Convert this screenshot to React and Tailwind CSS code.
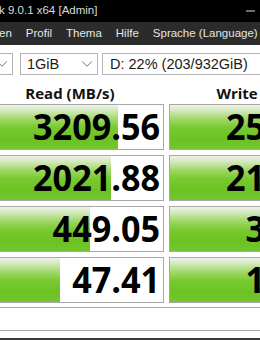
import React from "react";
import { ChevronDown } from "lucide-react";

const rows = [
  { read: "3209.56", readFill: 141, write: "2544.69", writeFill: 140 },
  { read: "2021.88", readFill: 134, write: "2135.33", writeFill: 136 },
  { read: "449.05", readFill: 113, write: "356.62", writeFill: 118 },
  { read: "47.41", readFill: 83, write: "132.75", writeFill: 104 },
];

const menu = ["en", "Profil", "Thema", "Hilfe", "Sprache (Language)"];

const ResultCell = ({ value, fill }) => (
  <div className="relative h-[46px] border border-[#a8a8a8] bg-white overflow-hidden">
    <div
      className="absolute inset-y-0 left-0 bg-[linear-gradient(180deg,#eef3ea_0%,#cfe8b8_14%,#9fd866_32%,#78c92f_52%,#6cc222_80%,#74c632_100%)]"
      style={{ width: fill }}
    />
    <div className="relative h-full flex items-center justify-end pr-[3px] origin-right scale-x-95 font-['Open_Sans',sans-serif] font-bold text-[36px] leading-none text-black">
      {value}
    </div>
  </div>
);

const Combo = ({ className, children }) => (
  <div
    className={`h-[22px] flex items-center justify-between border border-[#b4b4b4] bg-white text-[14.5px] text-[#1a1a1a] ${className}`}
  >
    <span className="pl-[6px] leading-none">{children}</span>
    <ChevronDown size={18} strokeWidth={1.3} color="#6e6e6e" className="mr-[1px]" />
  </div>
);

export default function App() {
  return (
    <div className="w-[260px] h-[340px] overflow-hidden bg-white flex flex-col font-['Liberation_Sans',sans-serif]">
      <div className="h-[22px] shrink-0 bg-black text-[#dcdcdc] text-[11.5px] flex items-center justify-between pr-[5px]">
        <span className="-ml-px">k 9.0.1 x64 [Admin]</span>
        <svg width="9" height="2" viewBox="0 0 9 2">
          <line x1="0" y1="1" x2="9" y2="1" stroke="#d8d8d8" strokeWidth="1" />
        </svg>
      </div>

      <div className="h-[23px] shrink-0 bg-[#2b2b2b] text-[#e6e6e6] text-[11.5px] flex items-center gap-[14px] whitespace-nowrap">
        {menu.map((item) => (
          <span key={item} className={item === "en" ? "-ml-[1px]" : ""}>
            {item}
          </span>
        ))}
      </div>

      <div className="mt-[8px] flex items-center whitespace-nowrap">
        <Combo className="w-[40px] ml-[-27px] shrink-0">{""}</Combo>
        <Combo className="w-[78px] ml-[7px] shrink-0">1GiB</Combo>
        <div className="h-[22px] w-[200px] ml-[4px] shrink-0 flex items-center border border-[#b4b4b4] bg-white text-[14.5px] text-[#1a1a1a]">
          <span className="pl-[7px] leading-none">D: 22% (203/932GiB)</span>
        </div>
      </div>

      <div className="ml-[-24px] grid grid-cols-[188px_188px] gap-x-[5px] h-[29px] font-['Open_Sans',sans-serif] font-bold text-[15px] leading-[15px] text-[#111] whitespace-nowrap">
        <div className="pt-[11px] text-center">Read (MB/s)</div>
        <div className="pt-[11px] text-center">Write (MB/s)</div>
      </div>

      <div className="ml-[-24px] grid grid-cols-[188px_188px] gap-x-[5px] gap-y-[5px]">
        {rows.map((row) => (
          <React.Fragment key={row.read}>
            <ResultCell value={row.read} fill={row.readFill} />
            <ResultCell value={row.write} fill={row.writeFill} />
          </React.Fragment>
        ))}
      </div>

      <div className="mt-[4px] mx-[-2px] h-[24px] shrink-0 border border-[#a8a8a8] bg-white" />

      <div className="flex-1" />
      <div className="h-[2px] shrink-0 bg-[#3a3a3a]" />
    </div>
  );
}
